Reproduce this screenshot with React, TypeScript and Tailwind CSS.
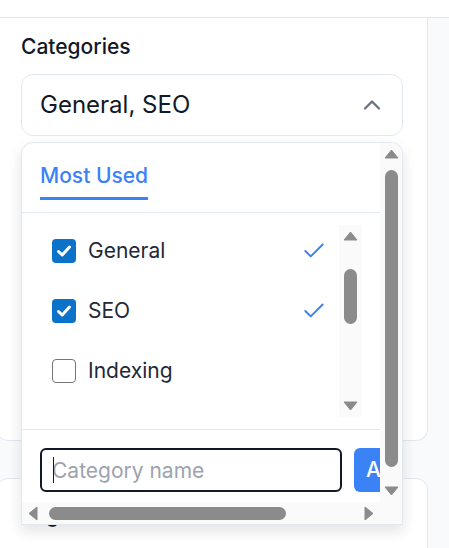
import { Check, ChevronUp } from "lucide-react";

const categories = [
  { id: 1, name: "General", checked: true },
  { id: 2, name: "SEO", checked: true },
  { id: 3, name: "Indexing", checked: false },
  { id: 4, name: "Tutorials", checked: false },
];

// little triangle used by the scrollbar buttons
const Arrow = ({ dir }: { dir: "up" | "down" | "left" | "right" }) => {
  const paths = {
    up: "M7.5 1 14 9H1Z",
    down: "M1 1H14L7.5 9Z",
    left: "M9 1V14L1 7.5Z",
    right: "M1 1 9 7.5 1 14Z",
  };
  const vertical = dir === "up" || dir === "down";
  return (
    <svg width={vertical ? 15 : 10} height={vertical ? 10 : 15} viewBox={vertical ? "0 0 15 10" : "0 0 10 15"}>
      <path d={paths[dir]} fill="#8b8b8b" stroke="#8b8b8b" strokeWidth="1" strokeLinejoin="round" />
    </svg>
  );
};

const VScrollbar = ({ width, thumbTop, thumbHeight }: { width: string; thumbTop: string; thumbHeight: string }) => (
  <div className={`${width} shrink-0 bg-[#fafafa] flex flex-col`}>
    <div className="h-[22px] flex items-center justify-center">
      <Arrow dir="up" />
    </div>
    <div className="flex-1 flex flex-col items-center">
      <div className={`${thumbTop} ${thumbHeight} w-[13px] rounded-full bg-[#8b8b8b]`} />
    </div>
    <div className="h-[22px] flex items-center justify-center">
      <Arrow dir="down" />
    </div>
  </div>
);

const CategoryItem = ({ name, checked }: { name: string; checked: boolean }) => (
  <div className="flex items-center gap-[12px] h-[48px] px-[12px] shrink-0">
    {checked ? (
      <span className="w-[24px] h-[24px] rounded-[4px] bg-[#0a72c9] flex items-center justify-center">
        <svg width="16" height="16" viewBox="0 0 16 16" fill="none">
          <path d="M2.5 8.5 6.2 12 13.5 4" stroke="white" strokeWidth="3" strokeLinecap="round" strokeLinejoin="round" />
        </svg>
      </span>
    ) : (
      <span className="w-[24px] h-[24px] rounded-[4px] border-[1.5px] border-[#767676] bg-white" />
    )}
    <span className="flex-1 text-[21px] leading-[30px] text-[#1f2937]">{name}</span>
    {checked && <Check size={26} strokeWidth={1.8} className="text-[#3b82f6]" />}
  </div>
);

const CategoryPicker = () => {
  return (
    <div className="relative">
      <div className="h-[62px] rounded-[12px] border border-[#e2e8f0] bg-white flex items-center justify-between pl-[18px] pr-[16px]">
        <span className="text-[24px] leading-[32px] text-[#111827]">General, SEO</span>
        <ChevronUp size={28} strokeWidth={2} className="text-[#6b7280]" />
      </div>

      <div className="absolute left-0 top-[68px] z-10 w-[382px] h-[383px] flex flex-col overflow-hidden rounded-t-[12px] border border-[#e2e8f0] bg-white shadow-[0_6px_14px_rgba(15,23,42,0.12)]">
        <div className="flex-1 min-h-0 flex">
          <div className="flex-1 min-w-0 overflow-hidden">
            <div className="border-b border-[#e2e8f0] px-[18px] pt-[17px] pb-[12px]">
              <span className="inline-block border-b-[3px] border-[#3b82f6] pb-[6px] text-[21px] leading-[31px] font-medium text-[#3b82f6]">
                Most Used
              </span>
            </div>

            <div className="px-[18px] py-[12px]">
              <div className="h-[192px] flex">
                <div className="flex-1 min-w-0 overflow-hidden flex flex-col gap-[12px] pt-[2px]">
                  {categories.map((c) => (
                    <CategoryItem key={c.id} name={c.name} checked={c.checked} />
                  ))}
                </div>
                <VScrollbar width="w-[23px]" thumbTop="mt-[22px]" thumbHeight="h-[55px]" />
              </div>
            </div>

            <div className="border-t border-[#e2e8f0] w-max min-w-full flex gap-[12px] px-[18px] pt-[18px] pb-[17px]">
              <div className="relative">
                <input
                  autoFocus
                  placeholder="Category name"
                  className="w-[302px] h-[44px] rounded-[6px] border-2 border-[#111827] px-[10px] text-[21px] text-[#111827] placeholder:text-[#9ca3af] outline-none"
                />
                <span className="absolute left-[13px] top-[9px] w-[1px] h-[26px] bg-[#111827]" />
              </div>
              <button className="h-[44px] rounded-[6px] bg-[#3b82f6] px-[12px] text-[21px] font-medium text-white">
                Add New
              </button>
            </div>
          </div>
          <VScrollbar width="w-[22px]" thumbTop="mt-[5px]" thumbHeight="h-[297px]" />
        </div>

        <div className="h-[22px] shrink-0 flex bg-[#fafafa]">
          <div className="w-[22px] flex items-center justify-center">
            <Arrow dir="left" />
          </div>
          <div className="flex-1 flex items-center">
            <div className="ml-[5px] w-[237px] h-[13px] rounded-full bg-[#8b8b8b]" />
          </div>
          <div className="w-[22px] flex items-center justify-center">
            <Arrow dir="right" />
          </div>
          <div className="w-[22px]" />
        </div>
      </div>
    </div>
  );
};

export default function App() {
  return (
    <div className="w-[449px] h-[548px] overflow-hidden bg-[#f8fafc] font-['Inter',sans-serif]">
      <div className="h-[18px] bg-white border-b border-[#e5e7eb]" />
      <div className="flex">
        <div className="w-[432px] -ml-[4px] shrink-0">
          <div className="h-[423px] rounded-b-[12px] border-x border-b border-[#e2e8f0] bg-white px-[24px] pt-[13px]">
            <div className="text-[21px] leading-[31px] font-medium text-[#111827]">Categories</div>
            <div className="mt-[12px]">
              <CategoryPicker />
            </div>
          </div>
          <div className="mt-[37px] h-[200px] rounded-[12px] border border-[#e2e8f0] bg-white px-[25px] pt-[20px]">
            <div className="text-[21px] leading-[31px] font-medium text-[#111827]">Tags</div>
          </div>
        </div>
        <div className="flex-1" />
      </div>
    </div>
  );
}
